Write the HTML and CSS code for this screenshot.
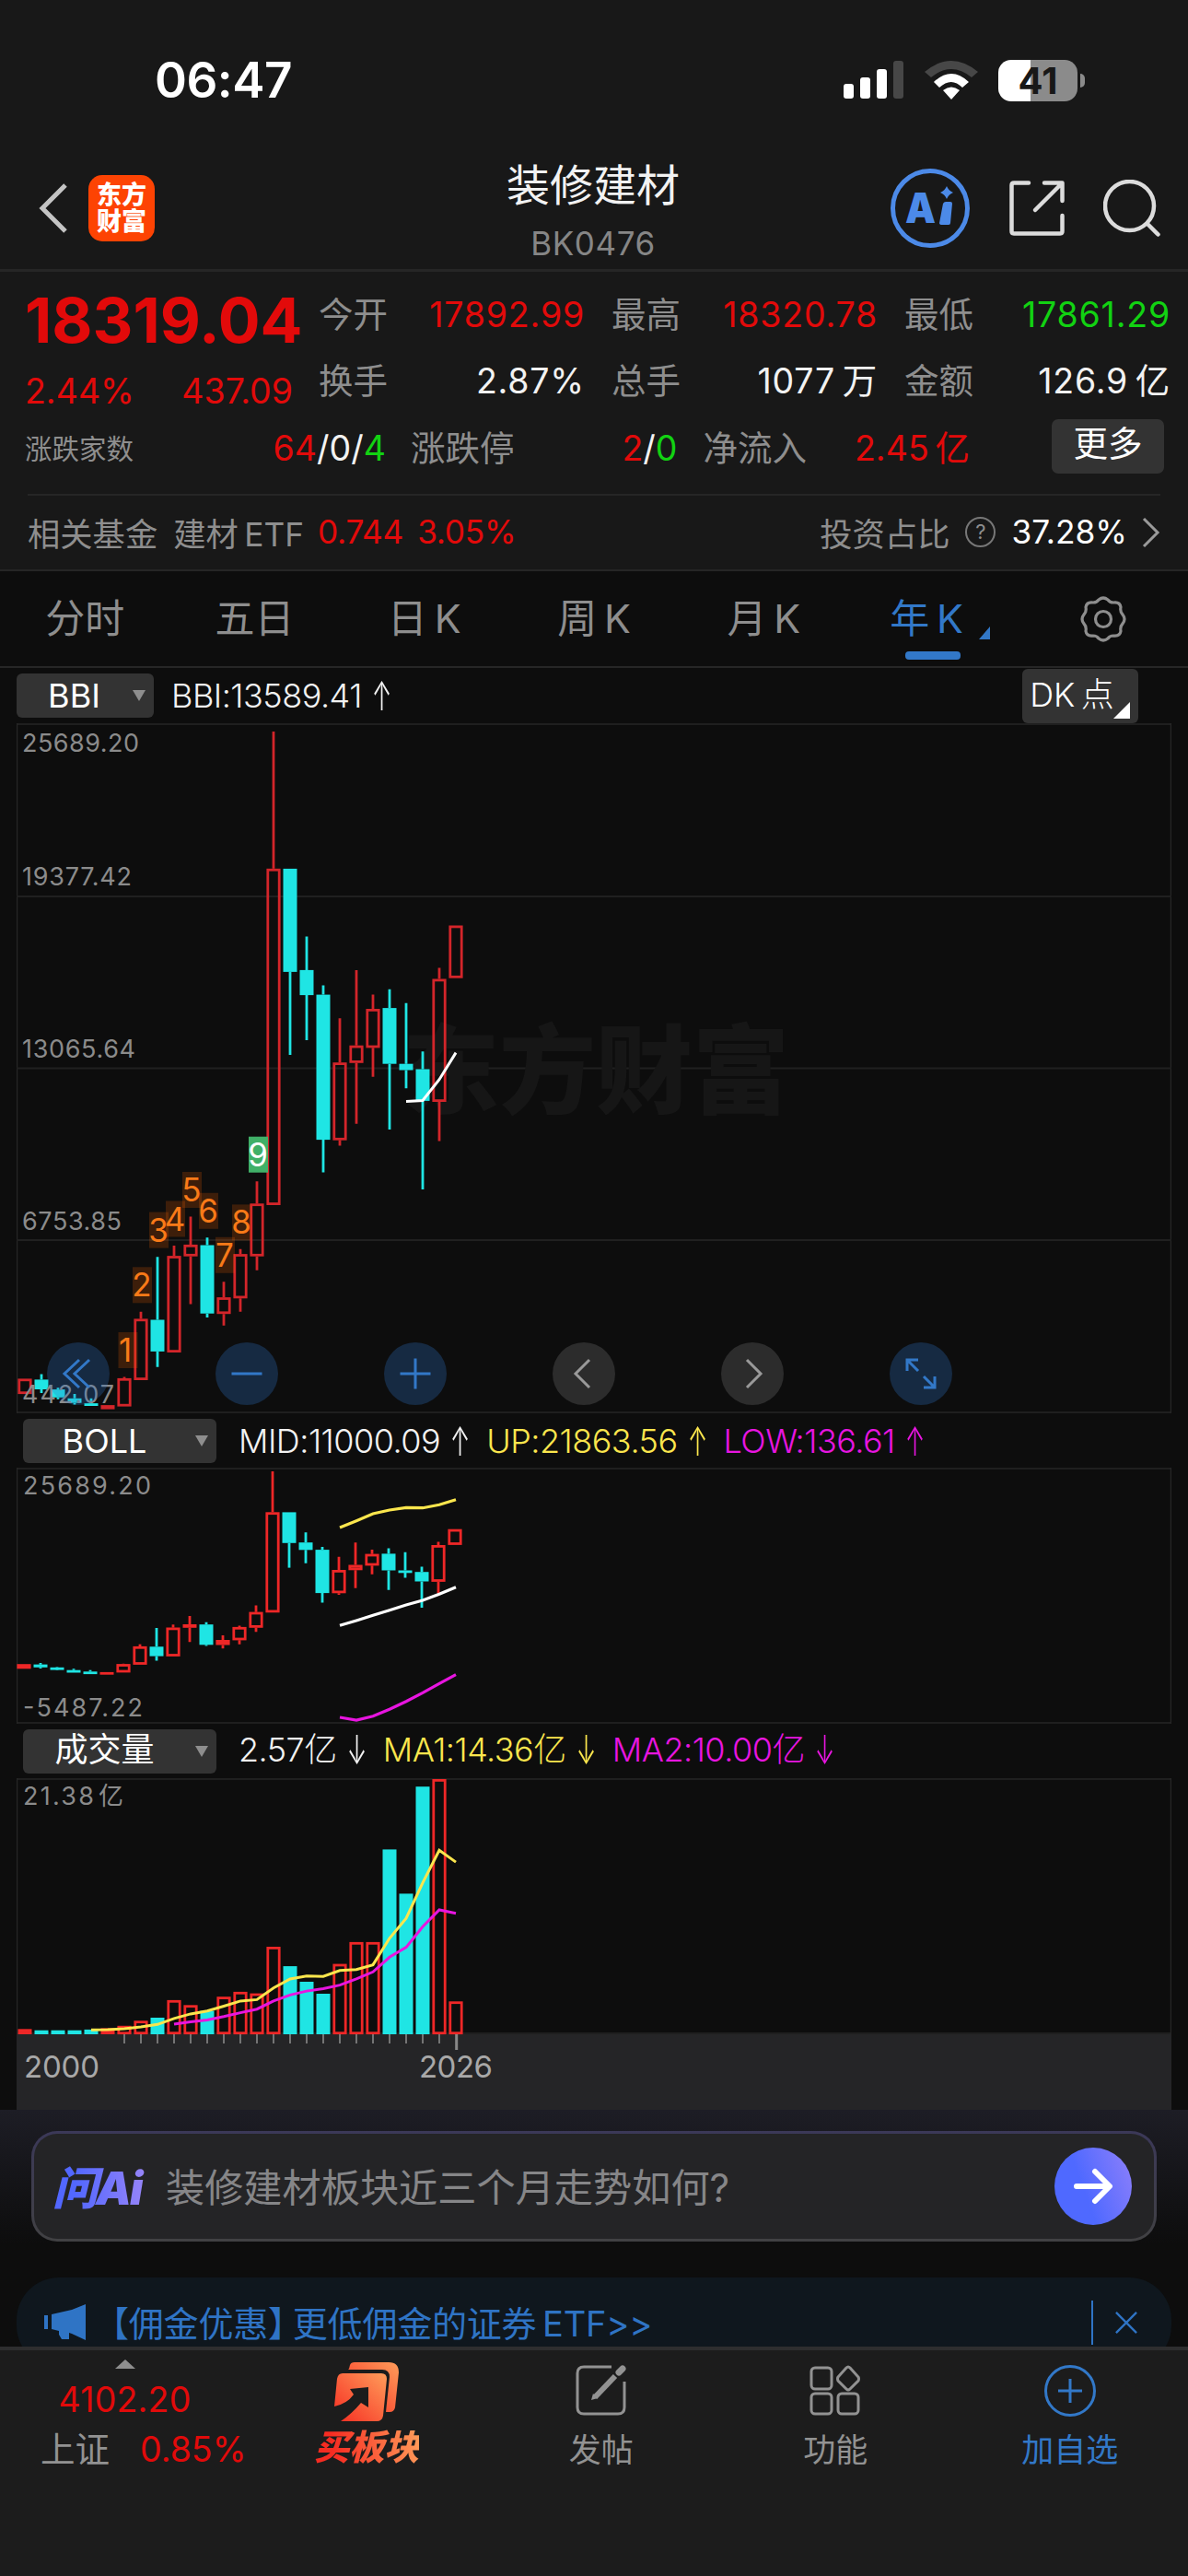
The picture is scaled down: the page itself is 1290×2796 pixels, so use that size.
FILE: index.html
```html
<!DOCTYPE html>
<html lang="zh-CN">
  <head>
    <meta charset="utf-8" />
    <meta name="viewport" content="width=device-width,initial-scale=1.0" />
    <title>装修建材 BK0476</title>
    <link rel="stylesheet" href="styles.css">
  </head>
  <body>
    <div class="statusbar">
      <span class="clock">06:47</span>
      <svg class="signal" width="66" height="42" viewBox="0 0 66 42">
        <rect x="0" y="25" width="11" height="16" rx="3" fill="#fff" />
        <rect x="18" y="18" width="11" height="23" rx="3" fill="#fff" />
        <rect x="36" y="9" width="11" height="32" rx="3" fill="#fff" />
        <rect x="54" y="0" width="11" height="41" rx="3" fill="#474747" />
      </svg>
      <svg class="wifi" width="58" height="42" viewBox="0 0 58 42">
        <path d="M0 12Q29 -12 58 12L51 18Q29 0 7 18Z" fill="#474747" />
        <path d="M10 23Q29 5 48 23L41 29Q29 17 16 29Z" fill="#fff" />
        <path d="M20 32Q29 25 38 32L29 42Z" fill="#fff" />
      </svg>
      <div class="battery"><span>41</span></div>
    </div>

    <header class="header">
      <div class="header-left">
        <svg width="32" height="54" viewBox="0 0 32 54" fill="none" stroke="#c4c4c4" stroke-width="5"><path d="M29 2L4 27L29 52" /></svg>
        <div class="logo"><span>东方</span><span>财富</span></div>
      </div>
      <div class="title">
        <h1>装修建材</h1>
        <p>BK0476</p>
      </div>
      <div class="header-right">
        <svg width="88" height="88" viewBox="0 0 88 88">
          <circle cx="44" cy="44" r="40.500" fill="none" stroke="#4c8ae8" stroke-width="5" />
          <text class="ai-mark" x="17" y="60" textLength="33" lengthAdjust="spacingAndGlyphs">A</text>
          <path d="M58 39Q59 37 61 37H66Q68 37 68 39L66 60Q66 62 64 62H57Q54 62 54 60Z" fill="#4c8ae8" />
          <path d="M62 20Q64 25 69 27Q64 29 62 34Q60 29 55 27Q60 25 62 20Z" fill="#4c8ae8" />
        </svg>
        <svg width="60" height="60" viewBox="0 0 60 60" fill="none" stroke="#dcdcdc" stroke-width="4.500" stroke-linecap="round" stroke-linejoin="round">
          <path d="M21 2.500H5Q2.500 2.500 2.500 5V55Q2.500 57.500 5 57.500H55Q57.500 57.500 57.500 55V38" />
          <path d="M38 2.500H57.500V22M56 4L28 32" />
        </svg>
        <svg width="62" height="62" viewBox="0 0 62 62" fill="none" stroke="#dcdcdc" stroke-width="4.500" stroke-linecap="round">
          <circle cx="28.500" cy="28.500" r="26.500" />
          <path d="M48 48L59.500 59.500" />
        </svg>
      </div>
    </header>

    <section class="quote">
      <div class="quote-main">
        <div class="quote-price">
          <strong class="price up">18319.04</strong>
          <div class="change up"><span>2.44%</span><span>437.09</span></div>
        </div>
        <dl class="stats">
          <dt>今开</dt><dd class="up">17892.99</dd>
          <dt>最高</dt><dd class="up">18320.78</dd>
          <dt>最低</dt><dd class="down">17861.29</dd>
          <dt>换手</dt><dd>2.87%</dd>
          <dt>总手</dt><dd>1077&thinsp;万</dd>
          <dt>金额</dt><dd>126.9&thinsp;亿</dd>
        </dl>
      </div>
      <div class="breadth">
        <span class="lbl small">涨跌家数</span>
        <span class="val w1"><i class="up">64</i>/0/<i class="down">4</i></span>
        <span class="lbl">涨跌停</span>
        <span class="val w2"><i class="up">2</i>/<i class="down">0</i></span>
        <span class="lbl">净流入</span>
        <span class="val w3 up">2.45&thinsp;亿</span>
        <button class="more">更多</button>
      </div>
      <div class="fund">
        <span>相关基金</span>
        <span class="fund-name">建材&thinsp;ETF</span>
        <span class="up">0.744</span>
        <span class="up">3.05%</span>
        <span class="ratio">投资占比</span>
        <span class="help">?</span>
        <span class="white">37.28%</span>
        <svg width="20" height="34" viewBox="0 0 20 34" fill="none" stroke="#9a9a9a" stroke-width="3"><path d="M2 2L17 17L2 32" /></svg>
      </div>
    </section>

    <nav class="tabs">
      <a>分时</a>
      <a>五日</a>
      <a>日&thinsp;K</a>
      <a>周&thinsp;K</a>
      <a>月&thinsp;K</a>
      <a class="active">年&thinsp;K</a>
      <a>
        <svg width="50" height="50" viewBox="0 0 50 50" fill="none" stroke="#8e8e8e" stroke-width="3.200" stroke-linejoin="round">
          <path d="M20 4Q25 0 30 4Q32 7 36 7Q43 6 44 12Q43 17 46 20Q50 25 46 30Q43 33 44 38Q43 44 36 43Q32 43 30 46Q25 50 20 46Q18 43 14 43Q7 44 6 38Q7 33 4 30Q0 25 4 20Q7 17 6 12Q7 6 14 7Q18 7 20 4Z" />
          <circle cx="25" cy="25" r="8.500" />
        </svg>
      </a>
    </nav>

    <main class="charts">
      <div class="bar bar-k">
        <button class="picker short">BBI</button>
        <span class="ind">BBI:13589.41<b>↑</b></span>
        <button class="dk">DK&thinsp;点</button>
      </div>
      <div class="panel">
        <svg id="kline" width="1254" height="749"></svg>
        <div class="tools">
          <button><svg viewBox="0 0 68 68"><path d="M35 19L19 34L35 49M46 19L30 34L46 49" /></svg></button>
          <button><svg viewBox="0 0 68 68"><path d="M17.500 34H50.500" /></svg></button>
          <button><svg viewBox="0 0 68 68"><path d="M17.500 34H50.500M34 17.500V50.500" /></svg></button>
          <button class="gray"><svg viewBox="0 0 68 68"><path d="M40 19L25 34L40 49" /></svg></button>
          <button class="gray"><svg viewBox="0 0 68 68"><path d="M28 19L43 34L28 49" /></svg></button>
          <button><svg viewBox="0 0 68 68"><path d="M19 31V19H31M19 19L31 31M49 37V49H37M49 49L37 37" /></svg></button>
        </div>
      </div>

      <div class="bar">
        <button class="picker">BOLL</button>
        <span class="ind">MID:11000.09<b>↑</b></span>
        <span class="ind yellow">UP:21863.56<b>↑</b></span>
        <span class="ind pink">LOW:136.61<b>↑</b></span>
      </div>
      <div class="panel"><svg id="boll" width="1254" height="278"></svg></div>

      <div class="bar bar-vol">
        <button class="picker">成交量</button>
        <span class="ind">2.57亿<b>↓</b></span>
        <span class="ind yellow">MA1:14.36亿<b>↓</b></span>
        <span class="ind pink">MA2:10.00亿<b>↓</b></span>
      </div>
      <div class="panel"><svg id="volume" width="1254" height="360"></svg></div>
    </main>

    <section class="ask">
      <div class="ask-box">
        <span class="ask-logo">问Ai</span>
        <span class="ask-text">装修建材板块近三个月走势如何?</span>
        <button class="ask-go">
          <svg width="44" height="44" viewBox="0 0 44 44" fill="none" stroke="#fff" stroke-width="6" stroke-linecap="round" stroke-linejoin="round"><path d="M4 22H39M24 6L40 22L24 38" /></svg>
        </button>
      </div>
    </section>

    <div class="banner-wrap">
      <div class="banner">
        <svg width="46" height="40" viewBox="0 0 46 40" fill="#2f74c5">
          <path d="M0 12H4V27H0ZM8 11L30 6L45 0V39L30 32L27 31V38H19L16 33V29L8 27Z" />
        </svg>
        <span class="banner-text"><span class="tag">【佣金优惠】</span>更低佣金的证券&thinsp;ETF&gt;&gt;</span>
        <svg class="close" width="26" height="26" viewBox="0 0 26 26" stroke="#2f74c5" stroke-width="2.500"><path d="M1 1L25 25M25 1L1 25" /></svg>
      </div>
    </div>

    <footer class="footer">
      <div class="index">
        <i class="tri"></i>
        <span class="up">4102.20</span>
        <div><span>上证</span><span class="up">0.85%</span></div>
      </div>
      <div class="action buy">
        <svg width="72" height="66" viewBox="0 0 72 66">
          <defs>
            <linearGradient id="hot" x1="0" y1="1" x2="1" y2="0">
              <stop offset="0" stop-color="#f62c22" />
              <stop offset="1" stop-color="#ff9d5a" />
            </linearGradient>
          </defs>
          <path fill="url(#hot)" d="M17 8L18 4Q19 1 23 1H60Q71 1 71 12L67 50Q66 55 61 55H57L61 17Q61 9 53 9H16Z" />
          <path fill="url(#hot)" d="M10 13H52Q58 13 58 19L54 59Q53 65 47 65H8Q20 57 30 45L38 50V28L18 30L22 36Q15 46 1 49L4 19Q5 13 10 13Z" />
        </svg>
        <span>买板块</span>
      </div>
      <div class="action">
        <svg width="56" height="56" viewBox="0 0 56 56" fill="none" stroke="#929292" stroke-width="3">
          <path d="M39 2H9Q2 2 2 9V46Q2 53 9 53H46Q53 53 53 46V18" />
          <path d="M21 35L43 12" stroke-width="6" />
          <path d="M47 8L51 4" stroke-width="7" stroke-linecap="round" />
          <path d="M17 38L19 31L24 36Z" fill="#929292" stroke="none" />
        </svg>
        <span>发帖</span>
      </div>
      <div class="action">
        <svg width="56" height="56" viewBox="0 0 56 56" fill="none" stroke="#929292" stroke-width="3">
          <rect x="2" y="3" width="22" height="23" rx="4" />
          <rect x="2" y="31" width="22" height="22" rx="4" />
          <rect x="31" y="31" width="22" height="22" rx="4" />
          <path d="M40 3Q42 1 44 3L53 13Q54 15 53 17L44 26Q42 28 40 26L31 17Q30 15 31 13Z" />
        </svg>
        <span>功能</span>
      </div>
      <div class="action add">
        <svg width="56" height="56" viewBox="0 0 56 56" fill="none" stroke="#3278c8" stroke-width="3">
          <circle cx="28" cy="28" r="26.500" />
          <path d="M15 28H41M28 15V41" />
        </svg>
        <span>加自选</span>
      </div>
    </footer>

    <script src="charts.js"></script>
  </body>
</html>
```

FILE: styles.css
```css
* {
  box-sizing: border-box;
}

body {
  margin: 0;
  width: 1290px;
  background: #0d0d0d;
  color: #f2f2f2;
  font-family: Inter, "Noto Sans CJK SC", sans-serif;
  font-size: 37.5px;
  white-space: nowrap;
}

button {
  border: none;
  padding: 0;
  font: inherit;
  color: #fff;
}

i {
  font-style: normal;
}

.up {
  color: #e20a0a;
}

.down {
  color: #12d212;
}

.white {
  color: #fff;
}

/* phone status bar */
.statusbar {
  display: flex;
  height: 160px;
  padding: 14px 113px 0 168px;
  align-items: center;
  background: #181818;
}

.clock {
  margin-right: auto;
  font-size: 53px;
  font-weight: 600;
  letter-spacing: -0.5px;
  color: #fff;
}

.wifi {
  margin: 0 22px;
}

.battery {
  position: relative;
  width: 86px;
  height: 45px;
  margin-right: 7px;
  border-radius: 14px;
  background: linear-gradient(90deg, #fff 41%, #8b8b8b 41%);
  text-align: center;
  line-height: 45px;
  font-size: 40px;
  font-weight: 700;
  color: #181818;
}

.battery::after {
  content: "";
  position: absolute;
  right: -8px;
  top: 15px;
  width: 5px;
  height: 15px;
  border-radius: 0 8px 8px 0;
  background: #8b8b8b;
}

.header {
  display: grid;
  grid-template-columns: 1fr auto 1fr;
  height: 135px;
  padding: 0 30px 0 42px;
  border-bottom: 3px solid #262626;
  background: #181818;
}

.header-left,
.header-right {
  display: flex;
  align-items: center;
}

.header-left {
  gap: 22px;
}

.header-right {
  justify-content: flex-end;
  gap: 42px;
}

.logo {
  display: flex;
  flex-direction: column;
  justify-content: center;
  width: 72px;
  height: 72px;
  border-radius: 15px;
  background: #fd4303;
  text-align: center;
  font-size: 27px;
  font-weight: 900;
  line-height: 29px;
  color: #fff;
}

.ai-mark {
  font-size: 46px;
  font-weight: 900;
  fill: #4c8ae8;
}

.title {
  margin-left: -14px;
  text-align: center;
}

.title h1 {
  margin: 16px 0 0;
  font-size: 47px;
  font-weight: 400;
  line-height: 50px;
}

.title p {
  margin: 18px 0 0;
  font-size: 35px;
  line-height: 40px;
  letter-spacing: 0.6px;
  color: #868686;
}

/* quote */
.quote {
  height: 325px;
  border-bottom: 2px solid #262626;
  background: #181818;
}

.quote-main {
  display: flex;
  height: 155px;
  padding: 11px 19px 0 27px;
}

.quote-price {
  width: 319px;
}

.price {
  display: block;
  font-size: 68px;
  line-height: 82px;
}

.change {
  display: flex;
  justify-content: space-between;
  padding-right: 28px;
  margin-top: 15px;
  line-height: 44px;
}

.stats {
  display: grid;
  grid-template-columns: 85px 204px 114px 204px 115px 203px;
  grid-auto-rows: 72px;
  flex: 1;
  margin: 0;
  line-height: 72px;
}

.stats dt {
  color: #8e8e8e;
}

.stats dd {
  margin: 0;
  text-align: right;
  letter-spacing: 0.8px;
}

.stats dt:nth-of-type(3n + 2),
.stats dt:nth-of-type(3n) {
  padding-left: 29px;
}

.breadth {
  display: flex;
  align-items: center;
  height: 74px;
  padding-left: 27px;
  line-height: 74px;
}

.lbl {
  color: #8e8e8e;
}

.lbl.small {
  font-size: 29.5px;
}

.val {
  text-align: right;
}

.val.w1 {
  width: 274px;
  margin-right: 27px;
}

.val.w2 {
  width: 177px;
  margin-right: 28px;
}

.val.w3 {
  width: 177px;
}

.more {
  width: 122px;
  height: 59px;
  margin: -6px 26px 0 auto;
  padding-bottom: 5px;
  border-radius: 7px;
  background: #333;
  line-height: 54px;
}

.fund {
  display: flex;
  align-items: center;
  margin: 12px 30px 0;
  height: 81px;
  border-top: 2px solid #262626;
  font-size: 35.3px;
  color: #8e8e8e;
}

.fund .up {
  margin-left: 15px;
  letter-spacing: -0.3px;
}

.fund-name {
  margin-left: 17px;
}

.ratio {
  margin-left: auto;
}

.help {
  width: 33px;
  height: 33px;
  margin: 0 17px;
  border: 2px solid #777;
  border-radius: 50%;
  text-align: center;
  line-height: 29px;
  font-size: 22px;
}

.fund svg {
  margin-left: 16px;
}

/* period tabs */
.tabs {
  display: grid;
  grid-template-columns: repeat(7, 1fr);
  height: 105px;
  border-bottom: 2px solid #262626;
  text-align: center;
  line-height: 102px;
  font-size: 43px;
  color: #8e8e8e;
}

.tabs a {
  position: relative;
}

.tabs svg {
  vertical-align: middle;
  margin-top: -6px;
}

.tabs .active {
  padding-right: 15px;
  color: #3278c8;
}

.tabs .active::before {
  content: "";
  position: absolute;
  left: 62px;
  bottom: 7px;
  width: 60px;
  height: 9px;
  border-radius: 4px;
  background: #3278c8;
}

.tabs .active::after {
  content: "";
  position: absolute;
  right: 31px;
  bottom: 29px;
  border-left: 12px solid transparent;
  border-bottom: 14px solid #3278c8;
}

/* charts */
.charts {
  padding: 0 18px;
}

.bar {
  display: flex;
  align-items: center;
  height: 59px;
  padding-left: 7px;
  font-size: 36px;
  font-weight: 300;
  line-height: 48px;
}

.bar-k {
  height: 60px;
  padding-left: 0;
}

.picker {
  position: relative;
  width: 210px;
  height: 48px;
  margin-right: 24px;
  padding-right: 33px;
  border-radius: 6px;
  background: #333;
  font-weight: 400;
}

.bar-vol .picker {
  padding-bottom: 3px;
  line-height: 45px;
}

.bar-vol .ind {
  margin-top: -3px;
}

.picker.short {
  width: 149px;
  margin-right: 19px;
  padding-right: 24px;
}

.picker::after {
  content: "";
  position: absolute;
  right: 9px;
  top: 18px;
  border: 7px solid transparent;
  border-top: 12px solid #8e8e8e;
  border-bottom: 0;
}

.ind {
  margin-right: 17px;
  letter-spacing: -0.5px;
}

.ind b {
  display: inline-block;
  width: 26px;
  margin-left: 7px;
  font-weight: 300;
  text-align: center;
  transform: scale(0.72, 1.2);
}

.yellow {
  color: #fbe64d;
}

.pink {
  color: #e815e0;
}

.dk {
  position: relative;
  width: 126px;
  height: 59px;
  margin: 0 36px 0 auto;
  padding: 0 18px 3px 0;
  border-radius: 6px;
  background: #333;
  font-size: 36px;
}

.dk::after {
  content: "";
  position: absolute;
  right: 9px;
  bottom: 5px;
  border-left: 18px solid transparent;
  border-bottom: 18px solid #fff;
}

.panel {
  position: relative;
}

.panel > svg {
  display: block;
}

.scale {
  font-size: 27px;
  fill: #8b8b8b;
}

.year {
  font-size: 33px;
  fill: #a8a8a8;
}

.mark {
  font-size: 35px;
  text-anchor: middle;
}

.watermark {
  font-size: 105px;
  font-weight: 900;
  fill: #161616;
}

.tools {
  position: absolute;
  left: 33px;
  bottom: 9px;
  display: flex;
  gap: 115px;
}

.tools button {
  width: 68px;
  height: 68px;
  border-radius: 50%;
  background: rgba(47, 120, 205, 0.28);
}

.tools button.gray {
  background: rgba(255, 255, 255, 0.13);
}

.tools svg {
  display: block;
  fill: none;
  stroke: #3278c8;
  stroke-width: 3;
}

.tools .gray svg {
  stroke: #999;
}

/* ask ai */
.ask {
  height: 182px;
  padding: 23px 34px 0;
  background: linear-gradient(#1d1d25, #0d0d0d 80%);
}

.ask-box {
  display: flex;
  align-items: center;
  height: 120px;
  padding: 0 24px 0 20px;
  border: 3px solid transparent;
  border-radius: 28px;
  background: linear-gradient(#242426, #242426) padding-box,
    linear-gradient(#3b3858, #414143) border-box;
}

.ask-logo {
  width: 123px;
  margin-top: -3px;
  font-size: 49px;
  font-weight: 900;
  font-style: italic;
  letter-spacing: -2px;
  background: linear-gradient(90deg, #5267ff 20%, #9a86f8 85%);
  background-clip: text;
  color: transparent;
}

.ask-text {
  margin-top: -4px;
  font-size: 42.2px;
  color: #868688;
}

.ask-go {
  display: flex;
  align-items: center;
  justify-content: center;
  width: 84px;
  height: 84px;
  margin-left: auto;
  border-radius: 50%;
  background: linear-gradient(70deg, #4f69ff 40%, #8f80fa);
}

.banner-wrap {
  height: 75px;
  padding: 0 18px;
  overflow: hidden;
}

.banner {
  display: flex;
  align-items: center;
  height: 98px;
  padding: 0 37px 0 30px;
  border-radius: 46px;
  background: #0f171e;
  color: #2f74c5;
}

.banner-text {
  margin: -4px 0 0 8px;
  font-size: 38px;
  letter-spacing: -0.2px;
}

.tag {
  margin-right: -11px;
}

.close {
  width: 50px;
  height: 48px;
  margin-left: auto;
  padding: 11px 0 11px 24px;
  border-left: 2px solid #2f74c5;
}

/* bottom bar */
.footer {
  display: flex;
  height: 249px;
  border-top: 4px solid #2e2e2f;
  background: #1c1c1c;
  color: #929292;
}

.index {
  display: flex;
  flex-direction: column;
  align-items: center;
  width: 271px;
}

.tri {
  margin-top: 10px;
  border: 11px solid transparent;
  border-bottom: 10px solid #8e8e8e;
  border-top: 0;
}

.index > span {
  margin-top: 10px;
  line-height: 48px;
  letter-spacing: 0.2px;
}

.index div {
  display: flex;
  gap: 33px;
  margin-top: 3px;
  padding-left: 44px;
  width: 100%;
  line-height: 54px;
}

.action {
  display: flex;
  flex-direction: column;
  align-items: center;
  width: 254.5px;
  padding-top: 16px;
  font-size: 35px;
}

.action svg {
  height: 56px;
}

.action span {
  margin-top: 12px;
  line-height: 48px;
}

.buy {
  padding-top: 12px;
}

.buy svg {
  height: 66px;
}

.buy span {
  margin-top: 3px;
  font-size: 38px;
  font-weight: 900;
  font-style: italic;
  background: linear-gradient(80deg, #f62c22 20%, #ff9d5a);
  background-clip: text;
  color: transparent;
}

.add {
  color: #3278c8;
}
```

FILE: charts.js
```js
// yearly candles from 2000: open, close, high, low, volume
const data = [
  [1083, 1642, 1642, 1083, 0.44],
  [1609, 1248, 1806, 1116, 0.33],
  [1248, 952, 1313, 886, 0.33],
  [919, 754, 1083, 689, 0.33],
  [738, 639, 919, 639, 0.39],
  [520, 672, 672, 520, 0.51],
  [623, 1658, 1708, 623, 0.7],
  [1593, 3844, 4107, 1593, 1.13],
  [3812, 2645, 6129, 2069, 1.39],
  [2612, 6162, 6540, 2612, 2.86],
  [6146, 6573, 7609, 4387, 2.44],
  [6557, 4042, 6836, 3894, 1.96],
  [4025, 4633, 5209, 3598, 3.14],
  [4600, 6228, 6409, 4107, 3.55],
  [6146, 8085, 8907, 5636, 3.42],
  [8036, 20413, 25459, 8036, 7.33],
  [20413, 16616, 20413, 13559, 5.71],
  [16682, 15761, 17915, 14101, 4.4],
  [15778, 10436, 16123, 9236, 3.4],
  [10419, 13279, 14907, 10222, 5.89],
  [13263, 13904, 16682, 11027, 7.72],
  [13822, 15252, 15778, 12753, 7.72],
  [15285, 13230, 15975, 10814, 15.49],
  [13230, 13000, 15465, 12326, 11.78],
  [13033, 11866, 13690, 8611, 20.76],
  [11833, 16353, 16764, 10386, 21.38],
  [16386, 18319, 18319, 16386, 2.75]
];

const RED = "#d3252a";
const CYAN = "#1fe5e4";
const LINE = "#262626";
const W = 1254;
const STEP = 18;

const rect = (x, y, w, h, attrs) =>
  `<rect x="${x}" y="${y.toFixed(1)}" width="${w}" height="${h.toFixed(1)}" ${attrs}/>`;

const text = (x, y, str, len, cls) =>
  `<text class="${cls}" x="${x}" y="${y}" textLength="${len}">${str}</text>`;

function frame(h) {
  return `<path d="M.5 0V${h}M${W - 0.5} 0V${h}M0 ${h - 1}H${W}M0 1H${W}" stroke="${LINE}" stroke-width="1.5" fill="none"/>`;
}

function line(values, start, x0, y, color, width) {
  const pts = values.map((v, i) => `${x0 + (start + i) * STEP},${y(v).toFixed(1)}`);
  return `<polyline points="${pts.join(" ")}" fill="none" stroke="${color}" stroke-width="${width}"/>`;
}

function candles(x0, y, red) {
  return data.map(([open, close, high, low], i) => {
    const x = x0 + i * STEP;
    const top = y(Math.max(open, close));
    const bottom = y(Math.min(open, close));
    const color = close > open ? red : CYAN;
    const h = Math.max(bottom - top, 2.8);
    let body = rect(x - 7.5, top, 15, h, `fill="${color}"`);
    if (close > open && h > 4.8) {
      body = rect(x - 6.2, top + 1.3, 12.4, h - 2.6, `fill="none" stroke="${color}" stroke-width="2.8"`);
    }
    return `<path d="M${x} ${y(high)}V${top}M${x} ${bottom}V${y(low)}" stroke="${color}" stroke-width="2.8"/>${body}`;
  }).join("");
}

function drawKline() {
  const y = (p) => 188.4 - (p - 19377.42) / 33.907;
  let out = frame(749);
  [188, 374.5, 561].forEach((gy) => {
    out += rect(0, gy - 1, W, 2, 'fill="#202020"');
  });
  out += `<text class="watermark" x="419" y="415">东方财富</text>`;
  out += candles(9, y, RED);

  for (let n = 1; n <= 9; n++) {
    const i = n + 5;
    const x = 9 + i * STEP;
    const bottom = y(data[i][2]) - 9.5;
    out += rect(x + (n === 1 ? 4 : 1.5) - 10.5, bottom - 39, 21, 39, n === 9 ? 'fill="#40b068"' : 'fill="#f60" fill-opacity=".2"');
    out += `<text class="mark" x="${x + 1}" y="${(bottom - 7).toFixed(1)}" fill="${n === 9 ? "#fff" : "#f97a18"}">${n}</text>`;
  }

  out += line([11850, 11882, 12655, 13641], 23, 9, y, "#fff", 3);
  out += text(6, 31, "25689.20", 127, "scale");
  out += text(6, 176, "19377.42", 119, "scale");
  out += text(6, 363, "13065.64", 123, "scale");
  out += text(6, 550, "6753.85", 108, "scale");
  out += text(6, 738, "442.07", 100, "scale");
  document.getElementById("kline").innerHTML = out;
}

function drawBoll() {
  const y = (p) => 2 + (25689.2 - p) / 113.78;
  let out = frame(278);
  out += candles(8, y, "#ee2727");
  out += line([18521, 19352, 20228, 20683, 20990, 20944, 21331, 21968], 19, 9, y, "#fbe64d", 3.2);
  out += line([6426, 7029, 7678, 8315, 8964, 9533, 10295, 11160], 19, 9, y, "#fff", 3.2);
  out += line([-4918, -5260, -4770, -3929, -2950, -1880, -743, 350], 19, 9, y, "#e815e0", 3.2);
  out += text(7, 29, "25689.20", 139, "scale");
  out += text(7, 270, "-5487.22", 130, "scale");
  document.getElementById("boll").innerHTML = out;
}

function average(n) {
  const vols = data.map((d) => d[4]);
  return vols.slice(n - 1).map((_, i) => vols.slice(i, i + n).reduce((a, b) => a + b) / n);
}

function drawVolume() {
  const base = 278;
  const y = (v) => base - v * 12.95;
  let out = frame(278) + rect(0, base, W, 82, 'fill="#252527"');
  data.forEach(([open, close, , , vol], i) => {
    const x = 9 + i * STEP;
    const h = base - y(vol);
    if (close > open && h > 8) {
      out += rect(x - 6.2, y(vol) + 1.3, 12.4, h - 2.6, 'fill="none" stroke="#ee2727" stroke-width="2.8"');
    } else {
      out += rect(x - 7.5, y(vol), 15, h, `fill="${close > open ? "#ee2727" : CYAN}"`);
    }
    if (i > 5) {
      out += rect(x - 0.8, base, i === 26 ? 3 : 1.6, i === 26 ? 17 : 10, 'fill="#888"');
    }
  });
  out += line(average(5), 4, 9, y, "#fbe64d", 3);
  out += line(average(10), 9, 9, y, "#e815e0", 3);
  out += text(7, 29, "21.38", 77, "scale") + text(89, 29, "亿", 28, "scale");
  out += text(8, 325, "2000", 82, "year") + text(437, 325, "2026", 80, "year");
  document.getElementById("volume").innerHTML = out;
}

drawKline();
drawBoll();
drawVolume();
```
